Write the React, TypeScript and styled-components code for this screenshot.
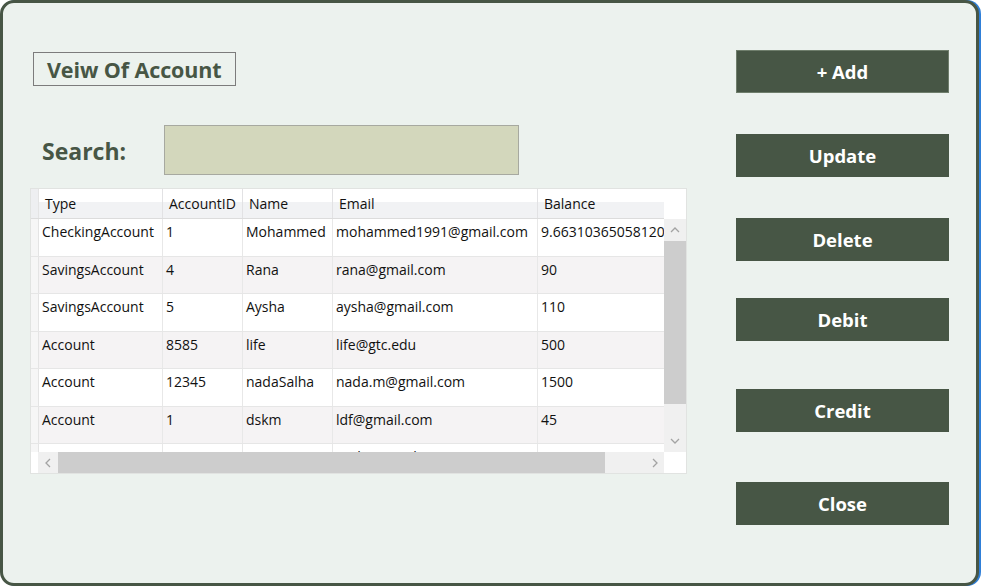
import React from "react";
import styled, { createGlobalStyle } from "styled-components";

const Global = createGlobalStyle`
  html, body { margin: 0; padding: 0; background: #ffffff; }
  body { font-family: "Open Sans", "Noto Sans", Arial, sans-serif; }
  * { box-sizing: border-box; }
`;

const DARK = "#475645";

const Window = styled.div`
  width: 979px;
  height: 586px;
  border: 3px solid ${DARK};
  border-radius: 14px;
  background: #ecf2ee;
  box-shadow: 2px 0 0 0 #2f7fd8;
  display: flex;
  overflow: hidden;
`;

const LeftPane = styled.div`
  width: 684px;
  padding: 49px 0 0 27px;
  display: flex;
  flex-direction: column;
  flex-shrink: 0;
`;

const TitleBox = styled.div`
  margin-left: 3px;
  width: 203px;
  height: 34px;
  border: 1px solid #7c7c7c;
  display: flex;
  align-items: center;
  padding-left: 13px;
  color: ${DARK};
  font-weight: 700;
  font-size: 21.5px;
  letter-spacing: -0.1px;
`;

const SearchRow = styled.div`
  margin-top: 39px;
  display: flex;
  align-items: center;
`;

const SearchLabel = styled.label`
  width: 134px;
  padding-left: 12px;
  padding-top: 2px;
  color: ${DARK};
  font-weight: 700;
  font-size: 23px;
`;

const SearchInput = styled.input`
  width: 355px;
  height: 50px;
  border: 1px solid #a7a9a0;
  background: #d3d7bc;
  outline: none;
  font-size: 16px;
  font-family: inherit;
`;

const GridFrame = styled.div`
  margin-top: 13px;
  width: 657px;
  height: 286px;
  border: 1px solid #e1e3e1;
  background: #ffffff;
  display: grid;
  grid-template-columns: 633px 22px;
  grid-template-rows: 30px 233px 21px;
`;

const Clip = styled.div`
  overflow: hidden;
  position: relative;
`;

const Row = styled.div<{ $alt?: boolean; $header?: boolean }>`
  display: grid;
  grid-template-columns: 8px 124px 80px 90px 205px 200px;
  width: 707px;
  height: ${(p) => (p.$header ? "30px" : "37.5px")};
  background: ${(p) =>
    p.$header
      ? "linear-gradient(#ffffff 0%, #ffffff 45%, #f1f2f4 46%, #f1f2f4 100%)"
      : p.$alt
      ? "#f5f3f4"
      : "#ffffff"};
  border-bottom: 1px solid ${(p) => (p.$header ? "#dcdcdc" : "#e6e6e6")};
`;

const Cell = styled.div<{ $header?: boolean }>`
  border-right: 1px solid ${(p) => (p.$header ? "#e2e2e4" : "#e8e8e8")};
  padding: ${(p) => (p.$header ? "5px 0 0 6px" : "3px 0 0 3px")};
  font-size: 14px;
  line-height: 19px;
  color: #111111;
  white-space: nowrap;
  overflow: hidden;
`;

const RowHead = styled.div<{ $header?: boolean }>`
  background: ${(p) => (p.$header ? "#eeeff1" : "#f6f6f6")};
  border-right: 1px solid #e4e4e4;
`;

const Empty = styled.div`
  background: #ffffff;
`;

const VScroll = styled.div`
  background: #f0f0f0;
  display: flex;
  flex-direction: column;
`;

const HScroll = styled.div`
  background: #ffffff;
  display: flex;
  padding-left: 7px;
`;

const ArrowBox = styled.div<{ $w?: number; $h?: number }>`
  width: ${(p) => p.$w ?? 22}px;
  height: ${(p) => p.$h ?? 22}px;
  background: #f0f0f0;
  display: flex;
  align-items: center;
  justify-content: center;
  flex-shrink: 0;
`;

const Thumb = styled.div<{ $len: number; $vertical?: boolean }>`
  background: #cdcdcd;
  ${(p) => (p.$vertical ? `height: ${p.$len}px;` : `width: ${p.$len}px;`)}
  flex-shrink: 0;
`;

const Track = styled.div`
  flex: 1;
  background: #f0f0f0;
`;

const RightPane = styled.div`
  padding: 47px 0 0 49px;
  display: flex;
  flex-direction: column;
`;

const ActionButton = styled.button<{ $top: number; $focused?: boolean }>`
  margin-top: ${(p) => p.$top}px;
  width: 213px;
  height: 43px;
  background: ${DARK};
  border: 1px solid ${(p) => (p.$focused ? "#6f7e6c" : DARK)};
  color: #ffffff;
  font-family: "Open Sans", "Noto Sans", Arial, sans-serif;
  font-weight: 700;
  font-size: 18.5px;
  padding: 0;
  cursor: pointer;
`;

const Chevron = ({ dir }: { dir: "up" | "down" | "left" | "right" }) => {
  const pts: Record<string, string> = {
    up: "1,6 5,2 9,6",
    down: "1,2 5,6 9,2",
    left: "6,1 2,5 6,9",
    right: "2,1 6,5 2,9",
  };
  const vertical = dir === "up" || dir === "down";
  return (
    <svg width={vertical ? 10 : 8} height={vertical ? 8 : 10} viewBox={vertical ? "0 0 10 8" : "0 0 8 10"}>
      <polyline points={pts[dir]} fill="none" stroke="#a3a3a3" strokeWidth="1.3" />
    </svg>
  );
};

const headers = ["Type", "AccountID", "Name", "Email", "Balance"];
const rows: string[][] = [
  ["CheckingAccount", "1", "Mohammed", "mohammed1991@gmail.com", "9.6631036505812047"],
  ["SavingsAccount", "4", "Rana", "rana@gmail.com", "90"],
  ["SavingsAccount", "5", "Aysha", "aysha@gmail.com", "110"],
  ["Account", "8585", "life", "life@gtc.edu", "500"],
  ["Account", "12345", "nadaSalha", "nada.m@gmail.com", "1500"],
  ["Account", "1", "dskm", "ldf@gmail.com", "45"],
  ["Account", "1", "amna", "nada@gmail.com", "500"],
];

const buttons: { label: string; top: number; focused?: boolean }[] = [
  { label: "+ Add", top: 0, focused: true },
  { label: "Update", top: 41 },
  { label: "Delete", top: 41 },
  { label: "Debit", top: 37 },
  { label: "Credit", top: 48 },
  { label: "Close", top: 50 },
];

export default function App() {
  return (
    <>
      <Global />
      <Window>
        <LeftPane>
          <TitleBox>Veiw Of Account</TitleBox>
          <SearchRow>
            <SearchLabel>Search:</SearchLabel>
            <SearchInput />
          </SearchRow>
          <GridFrame>
            <Clip>
              <Row $header>
                <RowHead $header />
                {headers.map((h) => (
                  <Cell $header key={h}>
                    {h}
                  </Cell>
                ))}
              </Row>
            </Clip>
            <Empty />
            <Clip>
              {rows.map((r, i) => (
                <Row key={i} $alt={i % 2 === 1}>
                  <RowHead />
                  {r.map((c, j) => (
                    <Cell key={j}>{c}</Cell>
                  ))}
                </Row>
              ))}
            </Clip>
            <VScroll>
              <ArrowBox>
                <Chevron dir="up" />
              </ArrowBox>
              <Thumb $vertical $len={163} />
              <Track />
              <ArrowBox>
                <Chevron dir="down" />
              </ArrowBox>
            </VScroll>
            <HScroll>
              <ArrowBox $w={20} $h={21}>
                <Chevron dir="left" />
              </ArrowBox>
              <Thumb $len={547} />
              <Track />
              <ArrowBox $w={19} $h={21}>
                <Chevron dir="right" />
              </ArrowBox>
            </HScroll>
            <Empty />
          </GridFrame>
        </LeftPane>
        <RightPane>
          {buttons.map((b) => (
            <ActionButton key={b.label} $top={b.top} $focused={b.focused}>
              {b.label}
            </ActionButton>
          ))}
        </RightPane>
      </Window>
    </>
  );
}
